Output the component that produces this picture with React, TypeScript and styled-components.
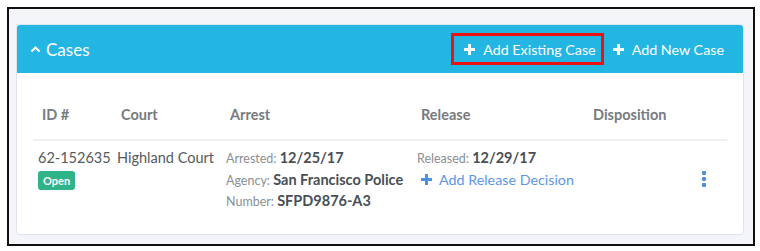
import React from "react";
import styled, { createGlobalStyle } from "styled-components";

const Global = createGlobalStyle`
  html, body { margin: 0; padding: 0; background: #ffffff; }
  body { font-family: "Lato", "Liberation Sans", sans-serif; }
  * { box-sizing: border-box; }
`;

const Frame = styled.div`
  margin: 7px 0 0 7px;
  width: 748px;
  height: 239px;
  border: 2px solid #111;
  background: #f4f5f9;
  padding: 15px 9px 9px 7px;
`;

const Card = styled.div`
  width: 728px;
  height: 211px;
  background: #ffffff;
  border: 1px solid #dfe4ec;
  border-radius: 4px;
  overflow: hidden;
`;

const Header = styled.div`
  height: 48px;
  background: #23b6e3;
  display: flex;
  align-items: center;
  padding: 0 0 0 13px;
  color: #ffffff;
`;

const Title = styled.div`
  display: flex;
  align-items: center;
  gap: 5px;
  font-size: 17px;
  flex: 1;
`;

const Actions = styled.div`
  display: flex;
  align-items: center;
  gap: 9px;
  margin-right: 19px;
`;

const ActionButton = styled.div<{ $highlight?: boolean }>`
  display: flex;
  align-items: center;
  gap: 8px;
  height: 32px;
  padding: 0 ${(p) => (p.$highlight ? "5px" : "0")} 0 ${(p) => (p.$highlight ? "10px" : "0")};
  border: ${(p) => (p.$highlight ? "3px solid #ee1111" : "none")};
  font-size: 14.3px;
  color: #ffffff;
`;

const Table = styled.div`
  padding: 28px 16px 0 16px;
`;

const Cols = "79px 109px 191px 172px 1fr 30px";

const HeadRow = styled.div`
  display: grid;
  grid-template-columns: ${Cols};
  height: 40px;
  align-items: center;
  padding: 0 0 11px 9px;
  border-bottom: 2px solid #eef0f3;
  font-size: 14.5px;
  font-weight: 700;
  color: #777b80;
`;

const BodyRow = styled.div`
  display: grid;
  grid-template-columns: ${Cols};
  padding: 6px 0 0 5px;
  font-size: 14.5px;
  color: #555a60;
`;

const Cell = styled.div`
  display: flex;
  flex-direction: column;
  align-items: flex-start;
`;

const Line = styled.div`
  height: 21.5px;
  line-height: 21.5px;
  white-space: nowrap;
`;

const Label = styled.span`
  font-size: 12.5px;
  color: #8a8f95;
`;

const Value = styled.span`
  font-weight: 700;
  color: #4a4f55;
`;

const Badge = styled.span`
  display: inline-block;
  margin-top: 2px;
  height: 19px;
  line-height: 19px;
  padding: 0 5px;
  border-radius: 3px;
  background: #2fb388;
  color: #ffffff;
  font-size: 11px;
  font-weight: 700;
`;

const LinkLine = styled.div`
  display: flex;
  align-items: center;
  gap: 7px;
  height: 21.5px;
  padding-left: 4px;
  color: #5b97e4;
  font-size: 14.3px;
`;

const MenuCell = styled.div`
  padding: 24px 0 0 5px;
  display: flex;
  justify-content: flex-start;
`;

const Plus = ({ color, size = 11 }: { color: string; size?: number }) => (
  <svg width={size} height={size} viewBox="0 0 11 11">
    <rect x="4" y="0" width="3" height="11" rx="0.5" fill={color} />
    <rect x="0" y="4" width="11" height="3" rx="0.5" fill={color} />
  </svg>
);

const Chevron = () => (
  <svg width="11" height="8" viewBox="0 0 11 8">
    <path d="M1.5 6.5 L5.5 2.5 L9.5 6.5" stroke="#fff" strokeWidth="2" fill="none" />
  </svg>
);

const Kebab = () => (
  <svg width="4" height="16" viewBox="0 0 4 16">
    <rect x="0" y="0" width="4" height="4" rx="1" fill="#4f8fe0" />
    <rect x="0" y="6" width="4" height="4" rx="1" fill="#4f8fe0" />
    <rect x="0" y="12" width="4" height="4" rx="1" fill="#4f8fe0" />
  </svg>
);

export default function App() {
  return (
    <>
      <Global />
      <Frame>
        <Card>
          <Header>
            <Title>
              <Chevron />
              Cases
            </Title>
            <Actions>
              <ActionButton $highlight>
                <Plus color="#fff" />
                Add Existing Case
              </ActionButton>
              <ActionButton>
                <Plus color="#fff" />
                Add New Case
              </ActionButton>
            </Actions>
          </Header>
          <Table>
            <HeadRow>
              <div>ID #</div>
              <div>Court</div>
              <div>Arrest</div>
              <div>Release</div>
              <div>Disposition</div>
              <div />
            </HeadRow>
            <BodyRow>
              <Cell>
                <Line>62-152635</Line>
                <Badge>Open</Badge>
              </Cell>
              <Cell>
                <Line>Highland Court</Line>
              </Cell>
              <Cell>
                <Line>
                  <Label>Arrested: </Label>
                  <Value>12/25/17</Value>
                </Line>
                <Line>
                  <Label>Agency: </Label>
                  <Value>San Francisco Police</Value>
                </Line>
                <Line>
                  <Label>Number: </Label>
                  <Value>SFPD9876-A3</Value>
                </Line>
              </Cell>
              <Cell>
                <Line>
                  <Label>Released: </Label>
                  <Value>12/29/17</Value>
                </Line>
                <LinkLine>
                  <Plus color="#4f8fe0" />
                  Add Release Decision
                </LinkLine>
              </Cell>
              <Cell />
              <MenuCell>
                <Kebab />
              </MenuCell>
            </BodyRow>
          </Table>
        </Card>
      </Frame>
    </>
  );
}
